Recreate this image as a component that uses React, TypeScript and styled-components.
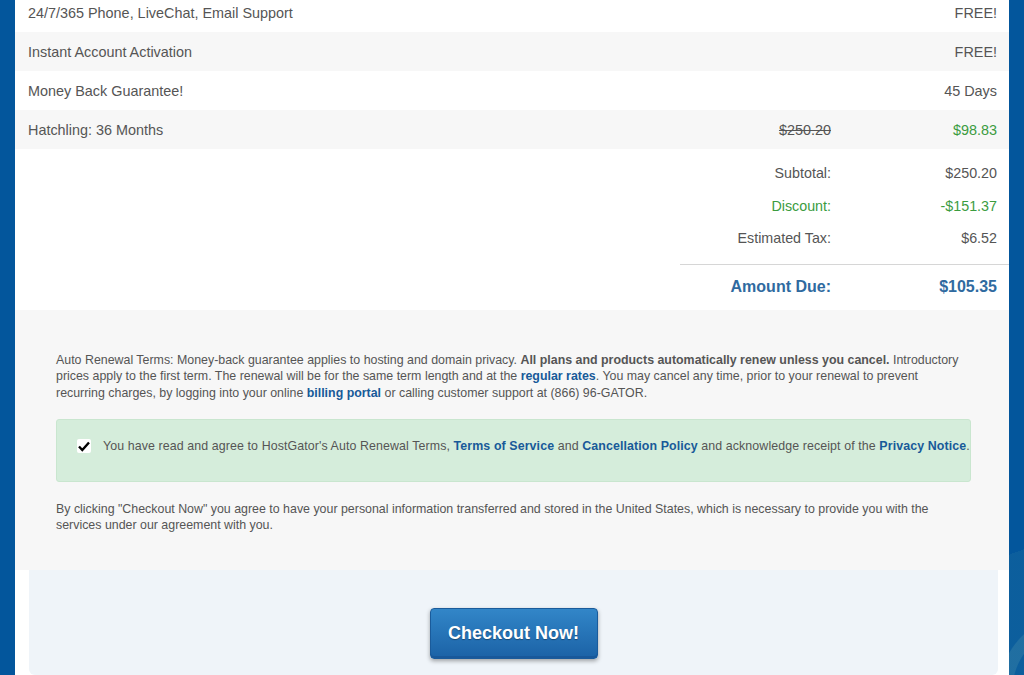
import React from "react";
import styled, { createGlobalStyle } from "styled-components";

const GlobalStyle = createGlobalStyle`
  html, body {
    margin: 0;
    padding: 0;
    background: #03569c;
    font-family: "Liberation Sans", Arial, sans-serif;
    color: #555;
    overflow: hidden;
  }
`;

// the blue backdrop shows a faint pattern at the lower right edge
const Page = styled.div`
  height: 675px;
  padding: 0 15px;
  overflow: hidden;
  background:
    radial-gradient(circle at 1075px 690px, transparent 62px, rgba(70, 140, 170, 0.35) 63px, rgba(70, 140, 170, 0.35) 75px, transparent 76px),
    linear-gradient(160deg, transparent 0 88%, rgba(40, 120, 160, 0.25) 88% 100%),
    #03569c;
`;

const Card = styled.div`
  background: #fff;
  margin-top: -7px;
`;

const ItemRow = styled.div<{ $striped?: boolean }>`
  display: grid;
  grid-template-columns: 1fr 150px 166px;
  align-items: center;
  height: 39px;
  font-size: 14.4px;
  color: #555;
  background: ${(p) => (p.$striped ? "#f7f7f7" : "#fff")};
`;

const Desc = styled.div`
  padding-left: 13px;
`;

const Cell = styled.div<{ $green?: boolean; $strike?: boolean; $inherit?: boolean }>`
  text-align: right;
  padding-right: 12px;
  color: ${(p) => (p.$inherit ? "inherit" : p.$green ? "#3b9c3f" : "#555")};
  text-decoration: ${(p) => (p.$strike ? "line-through" : "none")};
`;

const Totals = styled.div`
  display: flex;
  justify-content: flex-end;
  padding: 8px 0 0;
`;

const TotalsTable = styled.div`
  width: 329px;
`;

const TotalRow = styled.div`
  display: grid;
  grid-template-columns: 1fr 166px;
  height: 32.5px;
  align-items: center;
  font-size: 14.3px;
`;

const DueRow = styled.div`
  display: grid;
  grid-template-columns: 1fr 166px;
  align-items: center;
  margin-top: 9px;
  border-top: 1px solid #d6d6d6;
  height: 45px;
  font-size: 16px;
  font-weight: bold;
  color: #2f6aa0;
`;

const Terms = styled.div`
  background: #f7f7f7;
  padding: 42px 38px 36px 41px;
  font-size: 12.4px;
  line-height: 16.5px;
  color: #555;
`;

const Para = styled.p<{ $narrow?: boolean }>`
  margin: 0;
  max-width: ${(p) => (p.$narrow ? "908px" : "none")};
`;

const Link = styled.a`
  color: #185a99;
  font-weight: bold;
  text-decoration: none;
`;

const AgreeBox = styled.div`
  display: flex;
  align-items: flex-start;
  margin: 18px 0 19px;
  padding: 18px 0 26px 20px;
  background: #d5eddb;
  border: 1px solid #c9e6cf;
  border-radius: 3px;
  letter-spacing: 0.1px;
`;

const Check = styled.span`
  flex: none;
  display: flex;
  align-items: center;
  justify-content: center;
  width: 14px;
  height: 14px;
  margin: 1px 12px 0 0;
  background: #fff;
  border-radius: 2px;
`;

const Footer = styled.div`
  background: #fff;
  padding: 0 11px 0 14px;
`;

const ButtonPanel = styled.div`
  display: flex;
  justify-content: center;
  padding: 38px 0 16px;
  background: #eff4f9;
  border-radius: 0 0 6px 6px;
`;

const CheckoutButton = styled.button`
  width: 168px;
  height: 51px;
  border: 1px solid #1a5b9b;
  border-radius: 4px;
  background: linear-gradient(#3286c8, #1b62a6);
  box-shadow: 0 2px 4px rgba(0, 0, 0, 0.35), inset 0 -2px 0 #18589a;
  color: #fff;
  font-family: "Liberation Sans", Arial, sans-serif;
  font-size: 18px;
  font-weight: bold;
  text-shadow: 0 1px 1px rgba(0, 0, 0, 0.35);
  cursor: pointer;
`;

const items = [
  { name: "24/7/365 Phone, LiveChat, Email Support", price: "FREE!" },
  { name: "Instant Account Activation", price: "FREE!" },
  { name: "Money Back Guarantee!", price: "45 Days" },
  { name: "Hatchling: 36 Months", old: "$250.20", price: "$98.83", green: true },
];

export default function App() {
  return (
    <Page>
      <GlobalStyle />
      <Card>
        {items.map((it, i) => (
          <ItemRow key={it.name} $striped={i % 2 === 1}>
            <Desc>{it.name}</Desc>
            <Cell $strike>{it.old}</Cell>
            <Cell $green={it.green}>{it.price}</Cell>
          </ItemRow>
        ))}
        <Totals>
          <TotalsTable>
            <TotalRow>
              <Cell>Subtotal:</Cell>
              <Cell>$250.20</Cell>
            </TotalRow>
            <TotalRow>
              <Cell $green>Discount:</Cell>
              <Cell $green>-$151.37</Cell>
            </TotalRow>
            <TotalRow>
              <Cell>Estimated Tax:</Cell>
              <Cell>$6.52</Cell>
            </TotalRow>
            <DueRow>
              <Cell $inherit>Amount Due:</Cell>
              <Cell $inherit>$105.35</Cell>
            </DueRow>
          </TotalsTable>
        </Totals>
        <Terms>
          <Para $narrow>
            Auto Renewal Terms: Money-back guarantee applies to hosting and domain privacy.{" "}
            <b>All plans and products automatically renew unless you cancel.</b> Introductory
            prices apply to the first term. The renewal will be for the same term length and at the{" "}
            <Link>regular rates</Link>. You may cancel any time, prior to your renewal to prevent
            recurring charges, by logging into your online <Link>billing portal</Link> or calling
            customer support at (866) 96-GATOR.
          </Para>
          <AgreeBox>
            <Check>
              <svg width="12" height="11" viewBox="0 0 12 11">
                <path d="M1 5.5 L4.3 9 L11 1.5" fill="none" stroke="#000" strokeWidth="2.4" />
              </svg>
            </Check>
            <span>
              You have read and agree to HostGator's Auto Renewal Terms, <Link>Terms of Service</Link>{" "}
              and <Link>Cancellation Policy</Link> and acknowledge receipt of the{" "}
              <Link>Privacy Notice</Link>.
            </span>
          </AgreeBox>
          <Para>
            By clicking "Checkout Now" you agree to have your personal information transferred and
            stored in the United States, which is necessary to provide you with the services under
            our agreement with you.
          </Para>
        </Terms>
        <Footer>
          <ButtonPanel>
            <CheckoutButton>Checkout Now!</CheckoutButton>
          </ButtonPanel>
        </Footer>
      </Card>
    </Page>
  );
}
